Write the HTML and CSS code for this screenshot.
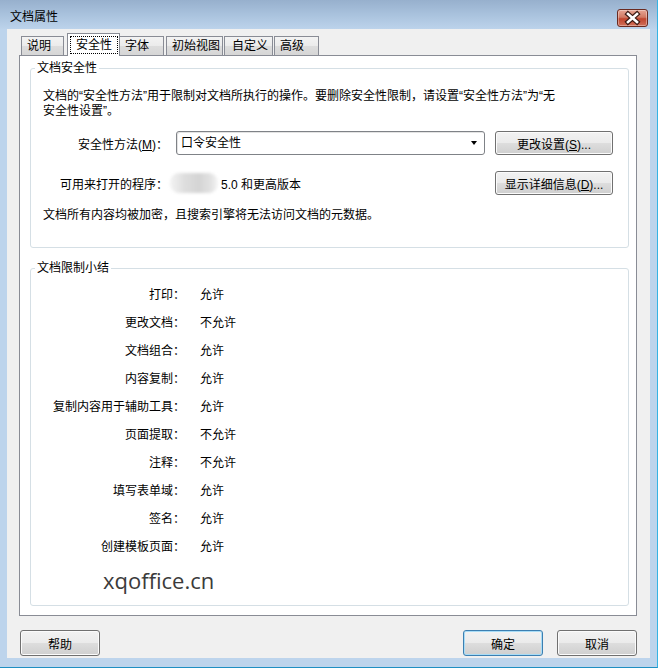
FILE: index.html
```html
<!DOCTYPE html>
<html lang="zh-CN">
<head>
    <meta charset="UTF-8">
    <meta name="viewport" content="width=device-width, initial-scale=1.0">
    <title>文档属性</title>
    <link rel="stylesheet" href="styles.css">
</head>
<body>
    <div class="window">
        <div class="titlebar">
            <span class="title">文档属性</span>
            <button class="close" title="关闭">
                <svg width="31" height="18" viewBox="0 0 31 18">
                    <path d="M11 5 L20 13 M20 5 L11 13" stroke="#3a1a14" stroke-width="5" stroke-linecap="square" fill="none"/>
                    <path d="M11 5 L20 13 M20 5 L11 13" stroke="#ffffff" stroke-width="2.6" stroke-linecap="square" fill="none"/>
                </svg>
            </button>
        </div>

        <div class="client">
            <div class="tabs">
                <div class="tab t1">说明</div>
                <div class="tab active"><span class="focus">安全性</span></div>
                <div class="tab t3">字体</div>
                <div class="tab t4">初始视图</div>
                <div class="tab t5">自定义</div>
                <div class="tab t6">高级</div>
            </div>

            <div class="panel">
                <fieldset class="group">
                    <legend>文档安全性</legend>
                    <div class="group-body sec">
                        <p class="desc">文档的“安全性方法”用于限制对文档所执行的操作。要删除安全性限制，请设置“安全性方法”为“无<br>安全性设置”。</p>
                        <div class="row first">
                            <span class="label">安全性方法(<u>M</u>)：</span>
                            <div class="combo">口令安全性<span class="arrow"></span></div>
                            <button class="btn wide">更改设置(<u>S</u>)...</button>
                        </div>
                        <div class="row second">
                            <span class="label">可用来打开的程序：</span>
                            <span class="blur"></span>
                            <span class="version">5.0 和更高版本</span>
                            <button class="btn wide">显示详细信息(<u>D</u>)...</button>
                        </div>
                        <p class="note">文档所有内容均被加密，且搜索引擎将无法访问文档的元数据。</p>
                    </div>
                </fieldset>

                <fieldset class="group summary">
                    <legend>文档限制小结</legend>
                    <div class="group-body">
                        <dl class="limits">
                            <dt>打印：</dt><dd>允许</dd>
                            <dt>更改文档：</dt><dd>不允许</dd>
                            <dt>文档组合：</dt><dd>允许</dd>
                            <dt>内容复制：</dt><dd>允许</dd>
                            <dt>复制内容用于辅助工具：</dt><dd>允许</dd>
                            <dt>页面提取：</dt><dd>不允许</dd>
                            <dt>注释：</dt><dd>不允许</dd>
                            <dt>填写表单域：</dt><dd>允许</dd>
                            <dt>签名：</dt><dd>允许</dd>
                            <dt>创建模板页面：</dt><dd>允许</dd>
                        </dl>
                        <div class="mark">xqoffice.cn</div>
                    </div>
                </fieldset>
            </div>

            <div class="footer">
                <button class="btn">帮助</button>
                <button class="btn default push">确定</button>
                <button class="btn">取消</button>
            </div>
        </div>
    </div>
</body>
</html>
```

FILE: styles.css
```css
*{
    box-sizing: border-box;
}
body{
    margin: 0;
    font-family: "Liberation Sans", "Noto Sans CJK SC", sans-serif;
    font-size: 12px;
    color: #000;
    background: #bdd4ec;
}
p{
    margin: 0;
}

/* window frame */
.window {
    width: 658px;
    height: 668px;
    display: flex;
    flex-direction: column;
    background: #bdd4ec;
    padding: 0 7px 9px 7px;
    border-right: 1px solid #35b3e4;
    border-bottom: 1px solid #1f8fc2;
}
.titlebar {
    height: 29px;
    margin: 0 -7px;
    padding: 0 9px 0 10px;
    display: flex;
    align-items: flex-start;
    background: linear-gradient(#97b0cd, #a9c2dd 50%, #bcd3eb);
}
.title {
    line-height: 14px;
    padding-top: 10px;
}
.close {
    margin-left: auto;
    margin-top: 9px;
    width: 31px;
    height: 18px;
    padding: 0;
    border: 1px solid #6a2a20;
    border-radius: 3px;
    background: linear-gradient(#e6a594, #d27a64 45%, #c0452e 55%, #d0705a);
    box-shadow: inset 0 0 0 1px rgba(255,255,255,0.35);
    display: flex;
}
.close svg{
    margin: -1px;
}

/* client area */
.client {
    flex: 1;
    background: #f0f0f0;
    padding: 0 13px 0 12px;
    display: flex;
    flex-direction: column;
}
.tabs {
    height: 26px;
    display: flex;
    align-items: flex-end;
    padding-left: 2px;
}
.tab {
    height: 19px;
    border: 1px solid #898c95;
    border-bottom: none;
    background: linear-gradient(#f3f3f3, #ebebeb 50%, #dddddd 50%, #d6d6d6);
    line-height: 15px;
    padding: 2px 0 0 5px;
    white-space: nowrap;
}
.t1{ width: 43px; }
.tab.active {
    width: 53px;
    height: 23px;
    margin-left: 3px;
    margin-bottom: -1px;
    background: #fff;
    position: relative;
    z-index: 1;
    padding: 2px 0 0 2px;
}
.focus {
    display: inline-block;
    border: 1px dotted #000;
    padding: 0 5px;
    line-height: 16px;
}
.t3{ width: 45px; margin-left: -1px; padding-left: 5px; }
.t4{ width: 57px; margin-left: 2px; }
.t5{ width: 49px; margin-left: 1px; padding-left: 7px; }
.t6{ width: 45px; margin-left: 1px; }

.panel {
    background: #fff;
    border: 1px solid #898c95;
    padding: 0 7px 9px 10px;
}

/* group boxes */
.group {
    margin: 5px 0 0;
    padding: 0;
    border: 1px solid #d5dfe5;
    border-radius: 3px;
    min-width: 0;
}
.group legend {
    margin-left: 4px;
    padding: 0 2px;
    line-height: 14px;
}
.group-body {
    padding: 14px 15px 24px 12px;
}
.desc, .note {
    line-height: 15px;
}
.row {
    display: flex;
    align-items: center;
    height: 24px;
}
.row.first{ margin-top: 12px; }
.row.second{ margin-top: 16px; }
.note{ margin-top: 13px; }
.label {
    width: 125px;
    text-align: right;
    flex: none;
}
.combo {
    width: 309px;
    height: 24px;
    margin-left: 8px;
    border: 1px solid #7f8287;
    border-radius: 3px;
    background: #fff;
    box-shadow: inset 1px 1px 0 #e3e3e3;
    padding-left: 4px;
    line-height: 21px;
    display: flex;
    align-items: center;
}
.arrow {
    margin-left: auto;
    margin-right: 7px;
    width: 0;
    height: 0;
    border-left: 3.5px solid transparent;
    border-right: 3.5px solid transparent;
    border-top: 4px solid #000;
}
.blur {
    width: 48px;
    height: 20px;
    margin-left: 2px;
    border-radius: 9px;
    background: linear-gradient(90deg, #f3f3f3, #dedede 30%, #d4d4d4 60%, #e2e2e2 85%, #f5f5f5);
    filter: blur(1.5px);
}
.version {
    margin-left: 3px;
}

/* buttons */
.btn {
    font: inherit;
    color: #000;
    width: 80px;
    height: 26px;
    padding: 0;
    border: 1px solid #707070;
    border-radius: 3px;
    background: linear-gradient(#f2f2f2, #ebebeb 48%, #dddddd 52%, #cfcfcf);
    box-shadow: inset 0 0 0 1px #fbfbfb;
}
.btn.wide {
    width: 118px;
    height: 24px;
    margin-left: auto;
}
.btn.default {
    border-color: #3c7fb1;
    box-shadow: inset 0 0 0 1px #a8dcf6;
}

/* restriction summary */
.summary {
    margin-top: 13px;
}
.summary .group-body {
    padding: 6px 0 13px 0;
}
.limits {
    margin: 0;
    display: grid;
    grid-template-columns: 154px 1fr;
    column-gap: 15px;
}
.limits dt, .limits dd {
    margin: 0;
    height: 28px;
    line-height: 28px;
}
.limits dt {
    text-align: right;
}
.mark {
    margin: 7px 0 0 72px;
    font-family: "Open Sans", sans-serif;
    font-size: 22px;
    line-height: 24px;
    color: #3b3b3b;
}

/* bottom row */
.footer {
    margin-top: 14px;
    padding-left: 1px;
    display: flex;
    gap: 14px;
}
.push {
    margin-left: auto;
}
```
